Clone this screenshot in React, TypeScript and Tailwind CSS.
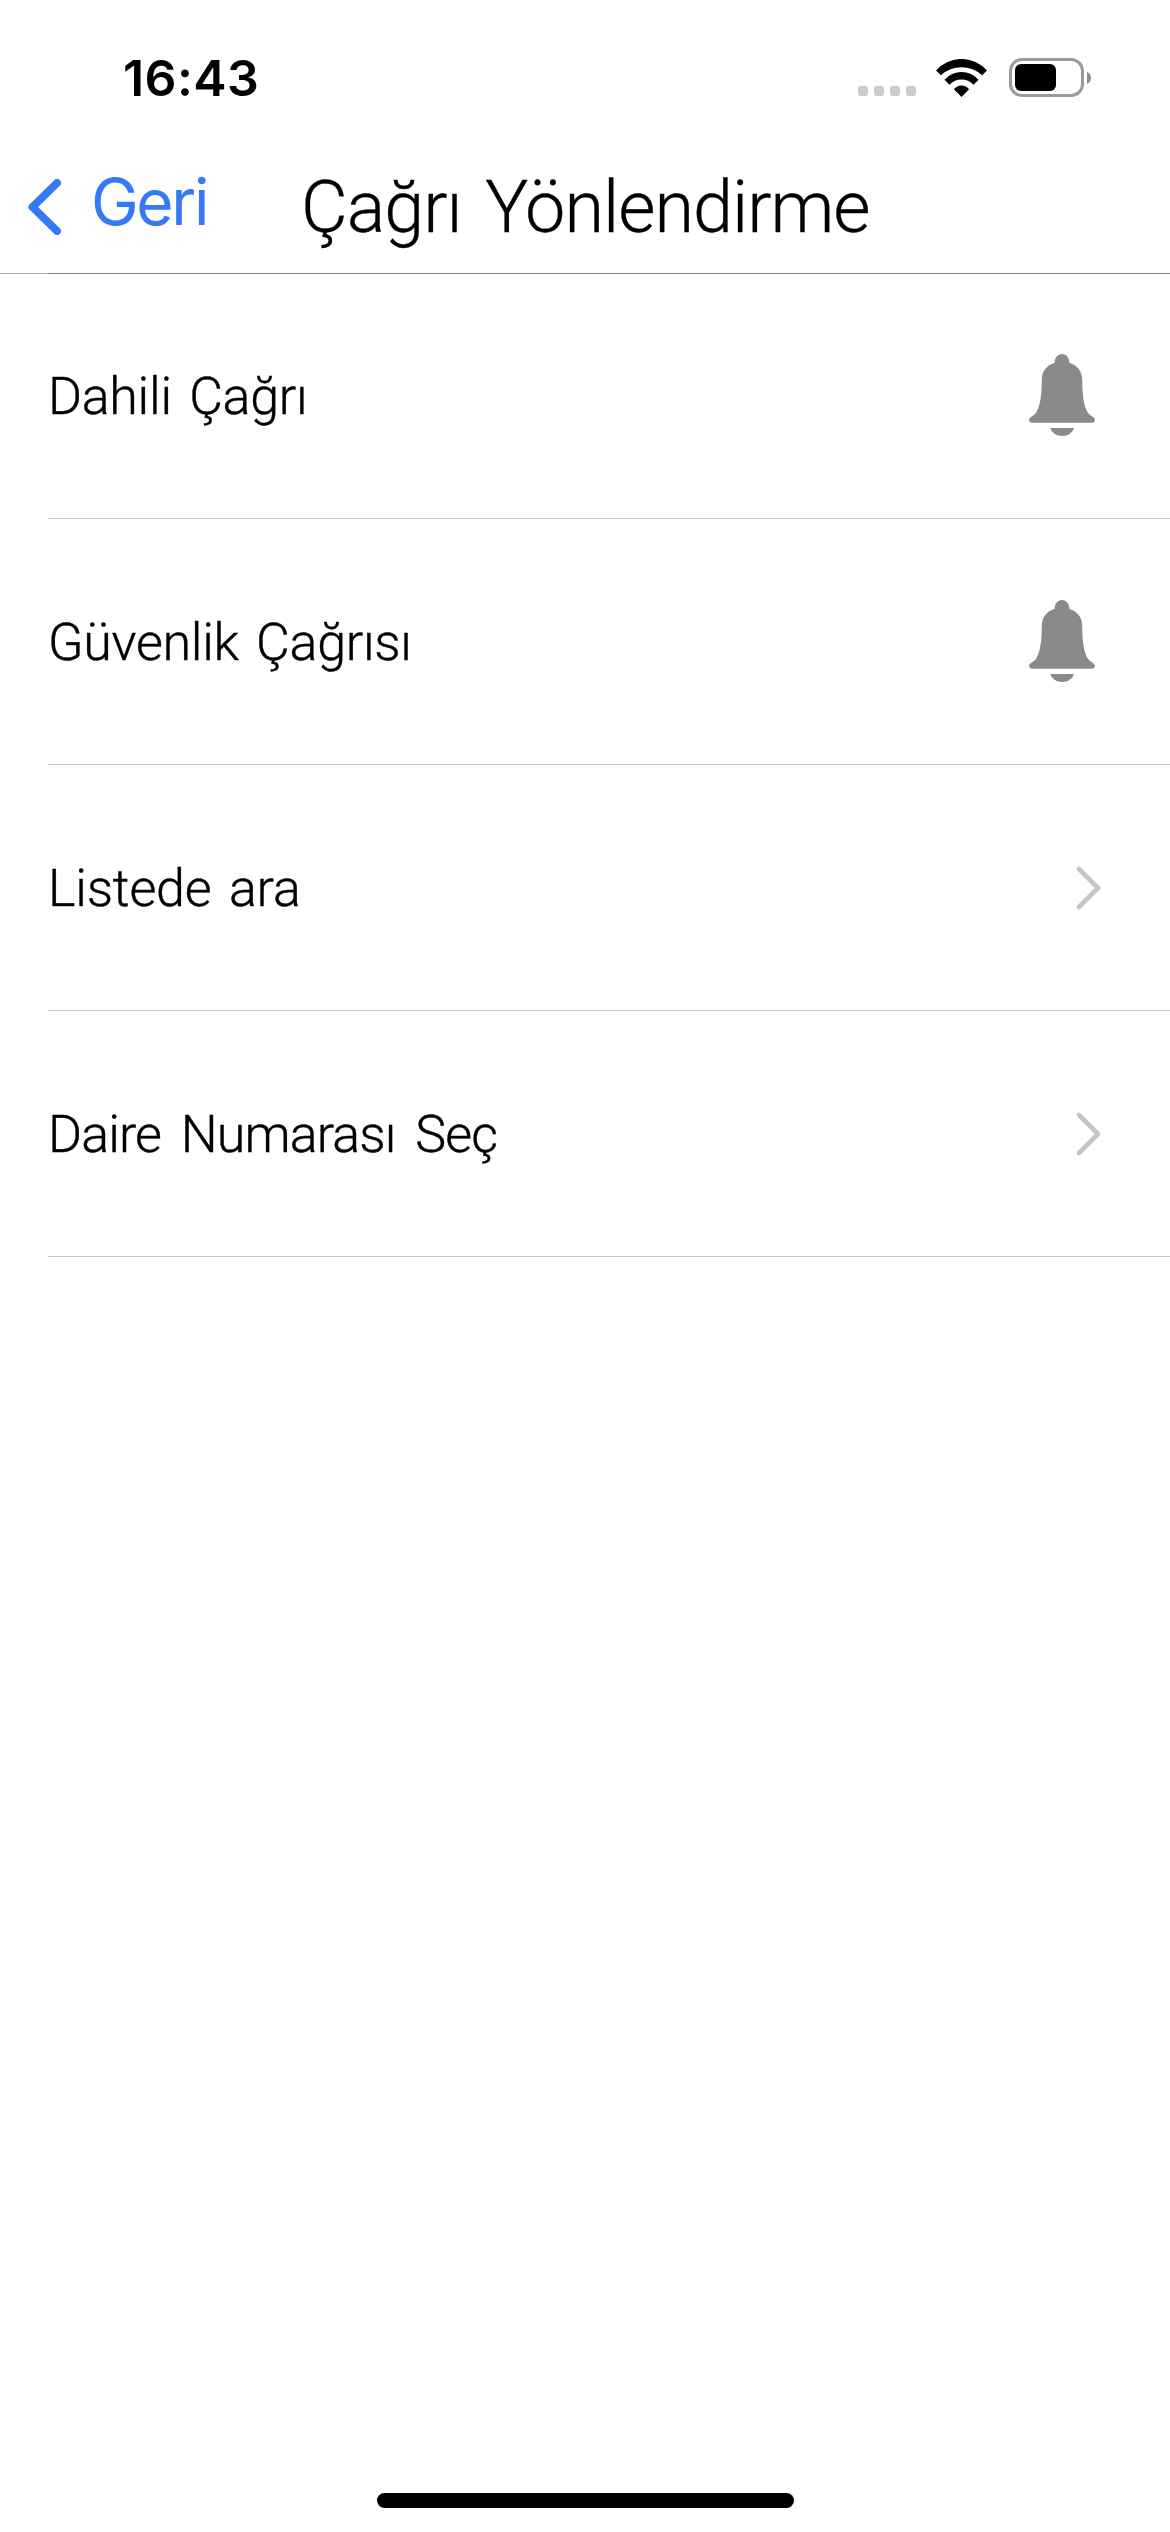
import { useState } from "react";
import clsx from "clsx";

type Item = {
  label: string;
  kind: "bell" | "link";
  spacing: string;
};

const items: Item[] = [
  { label: "Dahili Çağrı", kind: "bell", spacing: "tracking-[-0.3px] [word-spacing:5px]" },
  { label: "Güvenlik Çağrısı", kind: "bell", spacing: "tracking-[-0.3px] [word-spacing:5px]" },
  { label: "Listede ara", kind: "link", spacing: "tracking-[-0.2px] [word-spacing:5px]" },
  { label: "Daire Numarası Seç", kind: "link", spacing: "tracking-[-0.9px] [word-spacing:8px]" },
];

function Bell() {
  return (
    <svg className="h-[82px] w-[66px]" viewBox="0 0 198 247" fill="#8a8a8a">
      <path d="M77 26C77 11 86 0 99 0C112 0 121 11 121 26C146 34 160 52 160 80C160 128 166 164 179 179C184 185 198 190 198 198C198 204 195 207 189 207H9C3 207 0 204 0 198C0 190 14 185 19 179C32 164 38 128 38 80C38 52 52 34 77 26Z" />
      <path d="M64 223H135C131 237 117 247 99.500 247C82 247 68 237 64 223Z" />
    </svg>
  );
}

function Chevron() {
  return (
    <svg className="h-11 w-[25px]" viewBox="0 0 25 44" fill="none" stroke="#c5c5c7" strokeWidth="4.600" strokeLinecap="round" strokeLinejoin="round">
      <path d="M3 3L22 22L3 41" />
    </svg>
  );
}

function Wifi() {
  return (
    <svg className="ml-[20px] h-[38px] w-[51px]" viewBox="0 0 151 112">
      <path d="M0 34A100 100 0 0 1 151 34L136.500 48A89.500 89.500 0 0 0 14.500 48Z" />
      <path d="M25 61A68 68 0 0 1 126 61L111 76A48 48 0 0 0 40 76Z" />
      <path d="M53 89A29 29 0 0 1 98 89L75.500 112Z" />
    </svg>
  );
}

function Battery() {
  return (
    <div className="ml-[22px] flex items-center">
      <div className="flex h-[39px] w-[75px] items-center rounded-[13px] border-[3px] border-[#9b9b9b] pl-[3px]">
        <div className="h-[27px] w-[41px] rounded-[6px] bg-black"></div>
      </div>
      <svg className="ml-[3px] h-3 w-1" viewBox="0 0 4 12" fill="#8e8e8e">
        <path d="M0 0C2.500 1 4 3.300 4 6C4 8.700 2.500 11 0 12Z" />
      </svg>
    </div>
  );
}

function StatusBar() {
  return (
    <div className="flex h-[155px] items-center pl-[123px] pr-[79px]">
      <span className="font-['Inter',sans-serif] text-[50px] leading-none font-semibold tracking-[0.4px]">16:43</span>
      <div className="ml-auto flex items-center">
        <div className="flex gap-[6px] pt-[27px]">
          <i className="h-[10px] w-[10px] rounded-[3px] bg-[#cbcbcb]"></i>
          <i className="h-[10px] w-[10px] rounded-[3px] bg-[#cbcbcb]"></i>
          <i className="h-[10px] w-[10px] rounded-[3px] bg-[#cbcbcb]"></i>
          <i className="h-[10px] w-[10px] rounded-[3px] bg-[#cbcbcb]"></i>
        </div>
        <Wifi />
        <Battery />
      </div>
    </div>
  );
}

export default function App() {
  const [muted, setMuted] = useState<string[]>([]);

  function toggle(label: string) {
    setMuted((m) => (m.includes(label) ? m.filter((l) => l !== label) : [...m, label]));
  }

  return (
    <div className="flex h-[2532px] w-[1170px] flex-col bg-white font-['Roboto',sans-serif] text-black">
      <StatusBar />
      <header className="flex h-[118px] items-center pb-[14px] pl-7">
        <button className="flex w-[272px] items-center text-[#3579f6]">
          <svg className="h-14 w-[33px] shrink-0" viewBox="0 0 33 56" fill="none" stroke="currentColor" strokeWidth="8" strokeLinecap="round" strokeLinejoin="round">
            <path d="M29 4L4.500 28L29 52" />
          </svg>
          <span className="ml-[30px] pb-[11px] font-['Inter',sans-serif] text-[64px] leading-none tracking-[-2.4px]">Geri</span>
        </button>
        <h1 className="pt-[2px] pl-px text-[72px] leading-none font-light tracking-[-1px] whitespace-nowrap [word-spacing:7px] [-webkit-text-stroke:0.3px]">Çağrı Yönlendirme</h1>
      </header>
      <div className="flex h-px">
        <div className="w-12 bg-[#adadad]"></div>
        <div className="flex-1 bg-[#868688]"></div>
      </div>
      <ul className="-mt-px">
        {items.map((item) => (
          <li
            key={item.label}
            className="ml-12 flex h-[246px] items-center justify-between border-b border-[#c6c6c8]"
            onClick={() => item.kind === "bell" && toggle(item.label)}
          >
            <span className={clsx("pt-[3px] text-[52px] leading-none font-light [-webkit-text-stroke:0.4px]", item.spacing)}>{item.label}</span>
            {item.kind === "bell" ? (
              <div className={clsx("pr-[75px] pb-px", muted.includes(item.label) && "opacity-40")}>
                <Bell />
              </div>
            ) : (
              <div className="pr-[69px]">
                <Chevron />
              </div>
            )}
          </li>
        ))}
      </ul>
      <div className="mx-auto mt-auto mb-6 h-[15px] w-[417px] rounded-full bg-black"></div>
    </div>
  );
}
